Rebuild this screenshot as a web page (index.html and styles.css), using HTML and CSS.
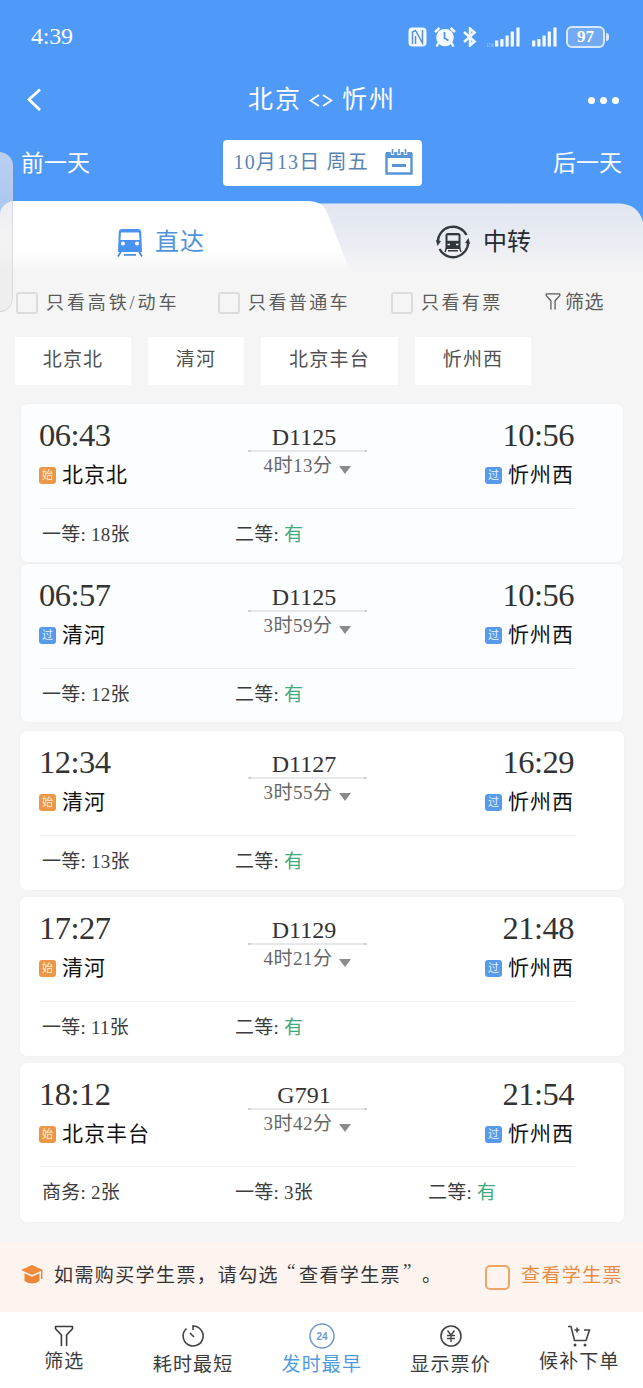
FILE: index.html
```html
<!DOCTYPE html>
<html lang="zh-CN">
<head>
<meta charset="utf-8">
<title>北京 - 忻州</title>
<link rel="stylesheet" href="styles.css">
</head>
<body>
<svg class="defs" width="0" height="0">
  <symbol id="funnel" viewBox="0 0 20 22"><path d="M1.500 1.500h17v2.200L12.600 10v10.500M1.500 1.500v2.200L7.400 10v10.500" fill="none" stroke="currentColor" stroke-width="1.600" stroke-linejoin="round" stroke-linecap="round"/></symbol>
  <symbol id="signal" viewBox="0 0 26 20"><path d="M1.700 19.500v-6M6.900 19.500v-7.500M12.100 19.500V8.500M17.300 19.500V4.500M23 19.500V.5" stroke="#fff" stroke-width="3.200" opacity=".95"/></symbol>
</svg>
<div class="phone">
  <header class="header">
    <div class="status">
      <span class="clock">4:39</span>
      <div class="status-icons">
        <svg class="i-nfc" width="19" height="20" viewBox="0 0 19 20"><rect x=".5" y=".5" width="18" height="19" rx="4" fill="#f4faff"/><path d="M4.500 17V5l3-1.500 7 12.500V3M7.500 9v8" fill="none" stroke="#5a8fc4" stroke-width="1.500"/></svg>
        <svg class="i-alarm" width="22" height="20" viewBox="0 0 22 20"><circle cx="11" cy="10.500" r="8.800" fill="#f4faff"/><path d="M1 5 5.500 1M21 5l-4.500-4M4.500 16 2.500 19.500M17.500 16l2 3.500" stroke="#f4faff" stroke-width="2.400"/><path d="M10.500 5v6l4 2.500" fill="none" stroke="#4a93ee" stroke-width="1.800"/></svg>
        <svg class="i-bt" width="14" height="20" viewBox="0 0 14 20"><path d="M1 5l10.500 9.500L7 18.500v-17l4.500 4L1 15" fill="none" stroke="#f4faff" stroke-width="2.500"/></svg>
        <span class="net">1%</span>
        <svg class="i-s1" width="26" height="20"><use href="#signal"/></svg>
        <svg class="i-s2" width="26" height="20"><use href="#signal"/></svg>
        <span class="battery">97</span><i class="battery-tip"></i>
      </div>
    </div>
    <div class="titlebar">
      <svg width="16" height="24" viewBox="0 0 16 24"><path d="M14 1.500 3 11.500 14 22" fill="none" stroke="#fff" stroke-width="2.800"/></svg>
      <h1 class="title"><span>北京</span><svg width="24" height="13" viewBox="0 0 24 13"><path d="M10 1 1.500 6.500 10 12M14 1l8.500 5.500L14 12" fill="none" stroke="#fff" stroke-width="1.800"/></svg><span>忻州</span></h1>
      <div class="more"><i></i><i></i><i></i></div>
    </div>
    <div class="dates">
      <span class="day">前一天</span>
      <div class="datebox"><span>10月13日 周五</span>
        <svg width="28" height="27" viewBox="0 0 28 27"><path d="M1.500 4v20.500h25V4" fill="none" stroke="#5795d8" stroke-width="2.400"/><path d="M1 3h26v6H1z" fill="#5795d8"/><path d="M7.500 0v6M14 0v6M20.500 0v6" stroke="#fff" stroke-width="3.500"/><path d="M7.500 0v5M14 0v5M20.500 0v5" stroke="#5795d8" stroke-width="1.600"/><path d="M7 16.500h14" stroke="#5795d8" stroke-width="3"/></svg>
      </div>
      <span class="day next">后一天</span>
    </div>
  </header>

  <div class="tabs">
    <svg class="tabs-bg" width="643" height="84" viewBox="0 0 643 84">
      <defs>
        <linearGradient id="gr" x1="0" y1="0" x2="0" y2="1"><stop offset="0" stop-color="#e2e6ef"/><stop offset=".45" stop-color="#e8ebf2"/><stop offset=".9" stop-color="#f5f5f5"/></linearGradient>
        <linearGradient id="gw" x1="0" y1="0" x2="0" y2="1"><stop offset="0" stop-color="#fff"/><stop offset=".72" stop-color="#fff"/><stop offset="1" stop-color="#f5f5f5"/></linearGradient>
      </defs>
      <path d="M0 84V18Q0 7 15 7.500H618Q638 7.500 643 26V84z" fill="url(#gr)"/>
      <path d="M0 75V24Q0 5 15 5H308Q322 5 327 16L350 75z" fill="url(#gw)"/>
    </svg>
    <div class="tab tab-on">
      <svg width="26" height="29" viewBox="0 0 26 29"><path d="M5 1h16q3 0 3.200 3L25 24H1L1.800 4Q2 1 5 1z" fill="#4a92f1"/><path d="M4 4.500h18l.5 7.500h-19z" fill="#fff"/><circle cx="6" cy="15.500" r="2" fill="#fff"/><circle cx="20" cy="15.500" r="2" fill="#fff"/><path d="M4 23.500 1 28.500M22 23.500l3 5M7 26.800h12" stroke="#4f8dd3" stroke-width="1.800"/></svg>
      <span>直达</span>
    </div>
    <div class="tab tab-off">
      <svg width="34" height="34" viewBox="0 0 34 34"><path d="M1.800 17A15.200 15.200 0 0 1 30.500 10M32.200 17A15.200 15.200 0 0 1 3.500 24" fill="none" stroke="#333940" stroke-width="2.300"/><path d="M0 15l5 1-3.500 5zM34 19l-5-1 3.500-5z" fill="#333940"/><path d="M12 8h10q2.500 0 2.500 2.500V24h-15V10.500Q9.500 8 12 8z" fill="#30363b"/><path d="M11.500 10.300h11v5.500h-11z" fill="#e8ebf2"/><path d="M11.500 19.500h2.500M20 19.500h2.500" stroke="#e8ebf2" stroke-width="1.600"/><path d="M10.500 23 9 27M23.500 23l1.500 4M12 25.800h10" stroke="#30363b" stroke-width="1.400"/></svg>
      <span>中转</span>
    </div>
  </div>

  <div class="filters">
    <label><i class="box"></i><span class="wide">只看高铁/动车</span></label>
    <label><i class="box"></i><span>只看普通车</span></label>
    <label><i class="box"></i><span>只看有票</span></label>
    <div class="sift"><svg width="16" height="19"><use href="#funnel"/></svg><span>筛选</span></div>
  </div>
  <div class="chips"><span>北京北</span><span>清河</span><span>北京丰台</span><span>忻州西</span></div>

  <main class="list">
    <article class="card tint">
      <div class="trip">
        <div class="end"><b class="time">06:43</b><div class="stop"><i class="tag from">始</i><span>北京北</span></div></div>
        <div class="mid"><span class="no">D1125</span><i class="line"></i><div class="dur"><span>4时13分</span><i class="tri"></i></div></div>
        <div class="end right"><b class="time">10:56</b><div class="stop"><i class="tag via">过</i><span>忻州西</span></div></div>
      </div>
      <div class="seats"><span>一等: 18张</span><span>二等: <em>有</em></span></div>
    </article>
    <article class="card tint">
      <div class="trip">
        <div class="end"><b class="time">06:57</b><div class="stop"><i class="tag via">过</i><span>清河</span></div></div>
        <div class="mid"><span class="no">D1125</span><i class="line"></i><div class="dur"><span>3时59分</span><i class="tri"></i></div></div>
        <div class="end right"><b class="time">10:56</b><div class="stop"><i class="tag via">过</i><span>忻州西</span></div></div>
      </div>
      <div class="seats"><span>一等: 12张</span><span>二等: <em>有</em></span></div>
    </article>
    <article class="card">
      <div class="trip">
        <div class="end"><b class="time">12:34</b><div class="stop"><i class="tag from">始</i><span>清河</span></div></div>
        <div class="mid"><span class="no">D1127</span><i class="line"></i><div class="dur"><span>3时55分</span><i class="tri"></i></div></div>
        <div class="end right"><b class="time">16:29</b><div class="stop"><i class="tag via">过</i><span>忻州西</span></div></div>
      </div>
      <div class="seats"><span>一等: 13张</span><span>二等: <em>有</em></span></div>
    </article>
    <article class="card">
      <div class="trip">
        <div class="end"><b class="time">17:27</b><div class="stop"><i class="tag from">始</i><span>清河</span></div></div>
        <div class="mid"><span class="no">D1129</span><i class="line"></i><div class="dur"><span>4时21分</span><i class="tri"></i></div></div>
        <div class="end right"><b class="time">21:48</b><div class="stop"><i class="tag via">过</i><span>忻州西</span></div></div>
      </div>
      <div class="seats"><span>一等: 11张</span><span>二等: <em>有</em></span></div>
    </article>
    <article class="card last">
      <div class="trip">
        <div class="end"><b class="time">18:12</b><div class="stop"><i class="tag from">始</i><span>北京丰台</span></div></div>
        <div class="mid"><span class="no">G791</span><i class="line"></i><div class="dur"><span>3时42分</span><i class="tri"></i></div></div>
        <div class="end right"><b class="time">21:54</b><div class="stop"><i class="tag via">过</i><span>忻州西</span></div></div>
      </div>
      <div class="seats"><span>商务: 2张</span><span>一等: 3张</span><span>二等: <em>有</em></span></div>
    </article>
  </main>

  <div class="notice">
    <svg width="22" height="20" viewBox="0 0 22 20"><path d="M11 0 22 5 11 10 0 5z" fill="#f08a3c"/><path d="M3.500 8.300 11 11.800l7.500-3.500V16q-7.500 5-15 0z" fill="#ee8537"/><path d="M20.700 5v9" stroke="#ee8537" stroke-width="1.400"/></svg>
    <span class="msg">如需购买学生票<span class="comma">，</span>请勾选<span class="lq">“</span>查看学生票<span class="rq">”</span><span class="period">。</span></span>
    <i class="obox"></i><span class="student">查看学生票</span>
  </div>

  <nav class="nav">
    <div class="edge"><svg width="20" height="22"><use href="#funnel"/></svg><span>筛选</span></div>
    <div><svg width="24" height="24" viewBox="0 0 24 24"><path d="M12 6V2a10 10 0 1 1-6.500 2.500M9 9l4 4" fill="none" stroke="#444" stroke-width="1.600"/></svg><span>耗时最短</span></div>
    <div class="on"><svg width="26" height="26" viewBox="0 0 26 26"><circle cx="13" cy="13" r="12" fill="none" stroke="#6f98cf" stroke-width="1.500"/><text x="13" y="16.700" text-anchor="middle" class="n24">24</text></svg><span>发时最早</span></div>
    <div><svg width="24" height="24" viewBox="0 0 24 24"><circle cx="12" cy="12" r="10" fill="none" stroke="#444" stroke-width="1.600"/><path d="M8.500 6.500 12 11l3.500-4.500M12 11v7M8 11.500h8M8 14.500h8" fill="none" stroke="#444" stroke-width="1.400"/></svg><span>显示票价</span></div>
    <div class="edge"><svg width="24" height="22" viewBox="0 0 24 22"><path d="M1 1.500h3L7.500 15.500H19L22.500 5H17M7.500 5h5M10 2.500v5" fill="none" stroke="#444" stroke-width="1.600"/><circle cx="8" cy="20" r="1.500" fill="#444"/><circle cx="18" cy="20" r="1.500" fill="#444"/></svg><span>候补下单</span></div>
  </nav>
  <div class="handle"></div>
</div>
</body>
</html>
```
FILE: styles.css
```css
* { box-sizing: border-box; }
body { margin: 0; background: #f5f5f5; font-family: "Liberation Serif", "Noto Sans CJK SC", serif; color: #333; }
i, em { font-style: normal; }
.defs { position: absolute; }
svg { display: block; flex: none; }
.phone { position: relative; width: 643px; height: 1388px; display: flex; flex-direction: column; overflow: hidden; white-space: nowrap; }

.header { height: 196px; background: #4f9af9; color: #fff; flex: none; }
.status { height: 73px; padding: 0 34px 0 31px; display: flex; align-items: center; justify-content: space-between; }
.clock { font-size: 24px; letter-spacing: -.2px; }
.status-icons { display: flex; align-items: center; }
.i-nfc { margin-right: 7px; }
.i-alarm { margin-right: 7px; }
.i-bt { margin-right: 9px; }
.net { width: 9px; font-size: 6px; line-height: 6px; align-self: flex-end; opacity: .5; }
.i-s1 { margin-right: 11px; }
.i-s2 { margin-right: 8px; }
.battery { width: 39px; height: 22px; border: 2px solid #d6e9ff; border-radius: 6px; background: #72aaf4; font: bold 17px/18px "Liberation Serif", serif; text-align: center; }
.battery-tip { width: 3px; height: 8px; margin-left: 1px; background: #d6e9ff; border-radius: 0 3px 3px 0; }

.titlebar { height: 54px; padding: 0 24px 0 26px; display: grid; grid-template-columns: 100px 1fr 100px; align-items: center; }
.title { margin: 0; font-weight: 400; font-size: 25px; line-height: 36px; display: flex; align-items: center; justify-content: center; gap: 8px; padding-right: 3px; }
.title span { letter-spacing: 2px; margin-right: -2px; }
.title svg { margin: 1px 1px 0; }
.more { display: flex; justify-content: flex-end; gap: 5px; }
.more i { width: 7px; height: 7px; border-radius: 50%; background: #fff; }

.dates { height: 72px; padding: 0 20px 0 21px; display: flex; align-items: center; justify-content: space-between; }
.day { font-size: 23px; width: 70px; padding-bottom: 5px; }
.datebox { width: 199px; height: 46px; background: #fff; border-radius: 4px; display: flex; align-items: center; justify-content: space-between; padding: 0 9px 2px 11px; color: #5a83b5; font-size: 20px; }
.datebox span { letter-spacing: 1.150px; padding-bottom: 3px; }

.tabs { position: relative; height: 88px; flex: none; display: flex; background: linear-gradient(#4f9af9 0 30px, #f5f5f5 30px); }
.tabs-bg { position: absolute; left: 0; top: 0; }
.tab { position: relative; display: flex; align-items: center; height: 92px; font-size: 24px; }
.tab span { padding-bottom: 5px; }
.tab-on { width: 322px; padding-left: 117px; gap: 12px; color: #5094dc; }
.tab-off { padding-left: 114px; gap: 13px; color: #262a30; }
.tab-on span { letter-spacing: 1px; }

.filters { height: 37px; display: flex; align-items: center; font-size: 18px; color: #5b5b5b; padding-left: 16px; flex: none; }
.filters label { display: flex; align-items: center; gap: 8px; }
.filters label:nth-child(1) { width: 202px; }
.filters label:nth-child(2) { width: 173px; }
.filters label:nth-child(3) { width: 154px; }
.filters label span { letter-spacing: 2.400px; padding-bottom: 4px; }
.filters label .wide { letter-spacing: 2.900px; }
.box { width: 22px; height: 22px; border: 2px solid #dcdcdc; border-radius: 3px; margin-top: 1px; }
.sift { display: flex; align-items: center; gap: 4px; font-size: 19px; letter-spacing: .5px; padding-bottom: 2px; }
.sift span { padding-bottom: 2px; }

.chips { display: flex; margin: 16px 0 0 15px; height: 48px; gap: 17px; flex: none; }
.chips span { background: #fff; width: 116px; text-align: center; font-size: 19px; line-height: 46px; color: #505050; letter-spacing: 1.200px; }
.chips span:nth-child(2) { width: 96px; }
.chips span:nth-child(3) { width: 137px; }

.list { flex: none; padding: 19px 19px 0 20px; height: 857px; }
.card { height: 159px; margin-bottom: 7px; background: #fff; border-radius: 7px; padding: 11px 0 0 20px; box-shadow: 0 0 3px rgba(0, 0, 0, .035); }
.card.tint { background: #fcfdfe; margin: 0 1px 2px; height: 158px; padding: 11px 0 0 19px; }
.card.tint + .card:not(.tint) { margin-top: 9px; }
.trip { width: 535px; height: 94px; border-bottom: 1px solid #efefef; display: grid; grid-template-columns: 1fr 119px 1fr; }
.card.last .trip { height: 93px; }
.card.last .no { margin-top: 8px; }
.time { display: block; font-weight: 400; font-size: 32.500px; line-height: 40px; letter-spacing: -.5px; color: #333; }
.stop { display: flex; align-items: center; gap: 6px; height: 40px; font-size: 21px; letter-spacing: 1px; color: #111; }
.stop span { padding-bottom: 4px; }
.end { margin-left: -1px; }
.right { text-align: right; margin: 0 1px 0 0; }
.right .stop { justify-content: flex-end; }
.tag { width: 17px; height: 17px; border-radius: 3px; font-size: 11px; line-height: 17px; letter-spacing: 0; text-align: center; color: #ffecd8; background: #eb9745; }
.via { background: #559bea; color: #e6f3ff; }
.mid { display: flex; flex-direction: column; align-items: center; }
.no { font-size: 24px; line-height: 26px; margin-top: 9px; padding-right: 7px; }
.line { width: 119px; height: 2px; background: radial-gradient(circle at 1px 1px, #c9ccce 1.500px, transparent 2px), radial-gradient(circle at 118px 1px, #c9ccce 1.500px, transparent 2px), #e6e8ea; border-radius: 1px; }
.dur { display: flex; align-items: center; gap: 6px; font-size: 19px; line-height: 28px; color: #666; letter-spacing: .5px; padding-right: 1px; }
.tri { border: 6.500px solid transparent; border-top: 8px solid #8b8b8b; border-bottom: 0; margin-top: 7px; }
.seats { display: grid; grid-template-columns: 193px 193px auto; padding: 11px 0 0 2px; width: 536px; font-size: 19px; line-height: 30px; letter-spacing: .250px; color: #3c3c3c; }
.seats em { color: #3fab7c; }

.notice { height: 70px; flex: none; background: #fef4ef; display: flex; align-items: center; padding: 0 0 5px 21px; font-size: 19px; color: #333; }
.msg { margin-left: 11px; width: 420px; letter-spacing: 1.400px; display: flex; padding-bottom: 2px; }
.comma { width: 21px; }
.lq { margin-left: 8px; width: 12px; }
.rq { margin-left: 2px; width: 19px; }
.obox { width: 25px; height: 25px; border: 2px solid #eea568; border-radius: 5px; margin: 5px 11px 0 11px; }
.student { color: #e78c43; letter-spacing: 1.400px; padding-bottom: 2px; }

.nav { height: 76px; flex: none; background: #fff; display: grid; grid-template-columns: repeat(5, 128.750px); }
.nav div { display: flex; flex-direction: column; align-items: center; justify-content: flex-start; padding-top: 12px; color: #3b3b3b; }
.nav span { font-size: 19px; line-height: 26px; margin-top: 4px; letter-spacing: 1.200px; }
.nav .edge { padding-top: 13px; }
.nav .edge span { margin-top: 2px; }
.nav .on { color: #4f9be0; padding-top: 11px; }
.nav .on span { margin-top: 3px; }
.n24 { font: bold 10px "Liberation Sans", sans-serif; fill: #6f98cf; }
.handle { position: absolute; left: -20px; top: 152px; width: 33px; height: 160px; border-radius: 14px; background: linear-gradient(rgba(215, 220, 240, .8), rgba(232, 232, 232, .55) 50%); border: 1px solid rgba(205, 205, 215, .6); }
```
